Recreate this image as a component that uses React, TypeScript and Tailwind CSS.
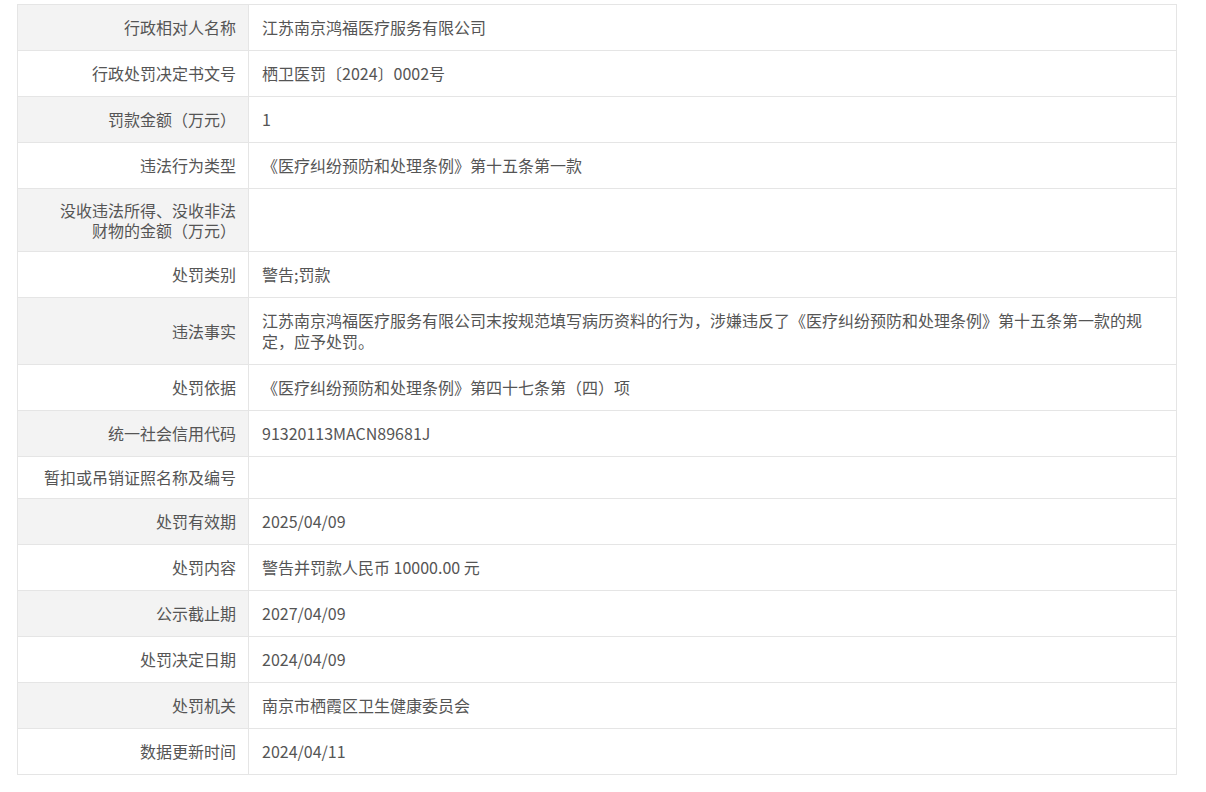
const rows: { label: string[]; value: string }[] = [
  { label: ['行政相对人名称'], value: '江苏南京鸿福医疗服务有限公司' },
  { label: ['行政处罚决定书文号'], value: '栖卫医罚〔2024〕0002号' },
  { label: ['罚款金额（万元）'], value: '1' },
  { label: ['违法行为类型'], value: '《医疗纠纷预防和处理条例》第十五条第一款' },
  { label: ['没收违法所得、没收非法', '财物的金额（万元）'], value: '' },
  { label: ['处罚类别'], value: '警告;罚款' },
  {
    label: ['违法事实'],
    value:
      '江苏南京鸿福医疗服务有限公司末按规范填写病历资料的行为，涉嫌违反了《医疗纠纷预防和处理条例》第十五条第一款的规定，应予处罚。',
  },
  { label: ['处罚依据'], value: '《医疗纠纷预防和处理条例》第四十七条第（四）项' },
  { label: ['统一社会信用代码'], value: '91320113MACN89681J' },
  { label: ['暂扣或吊销证照名称及编号'], value: '' },
  { label: ['处罚有效期'], value: '2025/04/09' },
  { label: ['处罚内容'], value: '警告并罚款人民币 10000.00 元' },
  { label: ['公示截止期'], value: '2027/04/09' },
  { label: ['处罚决定日期'], value: '2024/04/09' },
  { label: ['处罚机关'], value: '南京市栖霞区卫生健康委员会' },
  { label: ['数据更新时间'], value: '2024/04/11' },
]

export default function App() {
  return (
    <div
      className="min-h-[792px] bg-white pl-[17px] pt-[4px] text-[16px] text-[#555]"
      style={{ fontFamily: '"Microsoft YaHei", "Noto Sans CJK SC", "Noto Sans", sans-serif' }}
    >
      <table className="w-[1160px] table-fixed border-collapse border border-[#e5e5e5]">
        <colgroup>
          <col className="w-[231px]" />
          <col />
        </colgroup>
        <tbody>
          {rows.map((row, i) => (
            <tr key={row.label[0]} className="border-b border-[#e5e5e5]">
              <td
                className={
                  (i % 2 === 0 ? 'bg-[#f3f3f3] ' : 'bg-white ') +
                  (row.label.length > 1
                    ? 'py-[11px] leading-[20px] '
                    : row.value === ''
                      ? 'py-[11px] leading-[19px] '
                      : 'py-3 leading-[19px] ') +
                  'border-r border-[#e5e5e5] pl-6 pr-3 text-right align-middle'
                }
              >
                {row.label.map((line, j) => (
                  <span key={j}>
                    {j > 0 && <br />}
                    {line}
                  </span>
                ))}
              </td>
              <td className="bg-white py-3 pl-[13px] pr-[28px] align-middle leading-[21px]">{row.value}</td>
            </tr>
          ))}
        </tbody>
      </table>
    </div>
  )
}
